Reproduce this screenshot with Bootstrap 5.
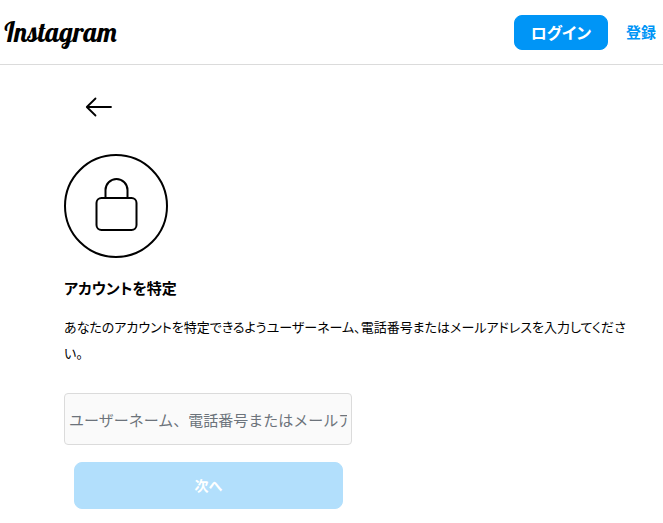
<!DOCTYPE html>
<html lang="ja">
<head>
<meta charset="utf-8">
<meta name="viewport" content="width=device-width, initial-scale=1">
<title>アカウントを特定 • Instagram</title>
<link href="https://cdn.jsdelivr.net/npm/bootstrap@5.3.0/dist/css/bootstrap.min.css" rel="stylesheet">
<style>
body { font-family: "Noto Sans CJK JP", sans-serif; color: #000; background: #fff; }
.site-bar { min-height: 65px; border-bottom: 1px solid #dbdbdb; padding: 0 7px 0 3px; }
.wordmark { font-family: "Lobster Two", "Liberation Serif", serif; font-style: italic; font-weight: 700; font-size: 27px; line-height: 32px; color: #000; }
.btn-login { --bs-btn-bg: #0095f6; --bs-btn-border-color: #0095f6; --bs-btn-color: #fff; --bs-btn-hover-bg: #1877f2; --bs-btn-hover-color: #fff; border-radius: 8px; font-size: 16px; line-height: 23px; font-weight: 700; padding: 5px 16px; font-feature-settings: "palt"; }
.link-signup { color: #0095f6; font-size: 15px; font-weight: 700; margin-left: 18px; }
.recover { padding: 30px 32px 14px 64px; }
.back-link { margin-left: 20px; width: 30px; height: 24px; color: #000; }
.lock-badge { margin-top: 35px; }
.recover-title { font-size: 15px; line-height: 24px; margin: 18px 0 14px; font-feature-settings: "palt"; }
.recover-text { font-size: 13px; line-height: 26px; margin-bottom: 27px; font-feature-settings: "palt"; }
.recover-form { max-width: 288px; }
.account-input { height: 52px; padding: 4px; border: 1px solid #dbdbdb; border-radius: 4px; background: #fafafa; font-size: 15px; }
.account-input::placeholder { color: #6c737b; }
.btn-next { --bs-btn-disabled-bg: #b2dffc; --bs-btn-disabled-border-color: #b2dffc; --bs-btn-disabled-color: #fff; --bs-btn-disabled-opacity: 1; margin: 17px 9px 0 10px; height: 47px; border-radius: 8px; font-size: 14px; font-weight: 700; }
</style>
</head>
<body>
<header class="site-bar d-flex align-items-center justify-content-between">
  <a class="wordmark text-decoration-none" href="#">Instagram</a>
  <nav class="d-flex align-items-center">
    <button type="button" class="btn btn-login">ログイン</button>
    <a class="link-signup text-decoration-none" href="#">登録</a>
  </nav>
</header>
<main class="recover">
  <a class="back-link d-block" href="#" aria-label="戻る">
    <svg class="d-block" width="30" height="24" viewBox="0 0 30 24" fill="none" stroke="currentColor" stroke-width="1.8" stroke-linecap="round" stroke-linejoin="round" aria-hidden="true"><path d="M27 12H3M11.5 3.5L2.8 12l8.7 8.5"/></svg>
  </a>
  <svg class="lock-badge d-block" width="104" height="104" viewBox="0 0 104 104" fill="none" stroke="#000" stroke-width="2" aria-hidden="true">
    <circle cx="52" cy="52" r="51"/>
    <rect x="32.5" y="44" width="40" height="32" rx="5"/>
    <path d="M41.5 44V36a11 11 0 0 1 22 0v8"/>
  </svg>
  <h1 class="recover-title fw-bold">アカウントを特定</h1>
  <p class="recover-text">あなたのアカウントを特定できるようユーザーネーム、電話番号またはメールアドレスを入力してください。</p>
  <form class="recover-form d-flex flex-column">
    <input class="form-control account-input" type="text" aria-label="ユーザーネーム、電話番号またはメールアドレス" placeholder="ユーザーネーム、電話番号またはメールアドレス">
    <button class="btn btn-next" type="submit" disabled>次へ</button>
  </form>
</main>
<script src="https://cdn.jsdelivr.net/npm/bootstrap@5.3.0/dist/js/bootstrap.bundle.min.js"></script>
</body>
</html>
